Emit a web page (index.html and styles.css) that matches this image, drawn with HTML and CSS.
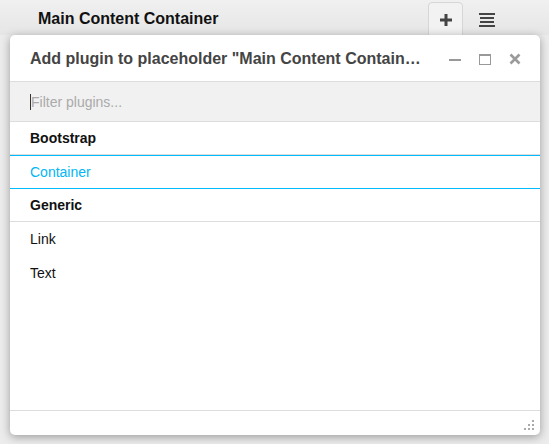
FILE: index.html
```html
<!DOCTYPE html>
<html>
<head>
<meta charset="utf-8">
<link rel="stylesheet" href="styles.css">
</head>
<body>
<div class="topbar">
  <div class="ph-title">Main Content Container</div>
  <div class="ph-actions">
    <div class="add-btn">
      <svg width="14" height="14" viewBox="0 0 14 14"><path d="M7 1v12M1 7h12" stroke="#444" stroke-width="3"/></svg>
    </div>
    <div class="menu-btn">
      <svg width="16" height="14" viewBox="0 0 16 14"><path d="M0 1h16M1 5h14M1 9h14M0 13h16" stroke="#444" stroke-width="2"/></svg>
    </div>
  </div>
</div>
<div class="dialog">
  <div class="dlg-head">
    <div class="dlg-title">Add plugin to placeholder "Main Content Container"</div>
    <div class="dlg-ctrls">
      <svg class="ctl" width="14" height="14" viewBox="0 0 14 14"><path d="M1 8h12" stroke="#999" stroke-width="2"/></svg>
      <svg class="ctl" width="14" height="14" viewBox="0 0 14 14"><rect x="1.5" y="2.5" width="11" height="10" fill="none" stroke="#999" stroke-width="1"/><path d="M1 3h12" stroke="#999" stroke-width="2"/></svg>
      <svg class="ctl" width="14" height="14" viewBox="0 0 14 14"><path d="M2.5 2.5l9 9M11.5 2.5l-9 9" stroke="#9a9a9a" stroke-width="2.6"/></svg>
    </div>
  </div>
  <div class="filter"><span class="caret"></span><span class="placeholder">Filter plugins...</span></div>
  <div class="list">
    <div class="row group">Bootstrap</div>
    <div class="row active">Container</div>
    <div class="row group">Generic</div>
    <div class="row item">Link</div>
    <div class="row item">Text</div>
  </div>
  <div class="dlg-foot">
    <svg class="grip" width="12" height="12" viewBox="0 0 12 12" fill="#aaa"><rect x="9" y="1" width="2" height="2"/><rect x="5" y="5" width="2" height="2"/><rect x="9" y="5" width="2" height="2"/><rect x="1" y="9" width="2" height="2"/><rect x="5" y="9" width="2" height="2"/><rect x="9" y="9" width="2" height="2"/></svg>
  </div>
</div>
</body>
</html>
```
FILE: styles.css
```css
html, body {
  margin: 0;
  padding: 0;
  background: #ececec;
  font-family: "Liberation Sans", Arial, sans-serif;
  width: 549px;
  height: 444px;
  overflow: hidden;
}
.topbar {
  height: 35px;
  display: flex;
  align-items: flex-start;
  justify-content: space-between;
  background: linear-gradient(#f0f0f0, #e6e6e6);
}
.ph-title {
  margin: 10px 0 0 38px;
  font-size: 16px;
  font-weight: bold;
  color: #111;
}
.ph-actions {
  display: flex;
  align-items: flex-start;
  margin: 2px 54px 0 0;
}
.add-btn {
  width: 35px;
  height: 40px;
  border: 1px solid #d6d6d6;
  border-radius: 4px;
  box-sizing: border-box;
  display: flex;
  justify-content: center;
  padding-top: 10px;
  background: #f2f2f2;
}
.add-btn svg { display: block; }
.menu-btn {
  margin-left: 16px;
  padding-top: 11px;
}
.menu-btn svg { display: block; }
.dialog {
  position: relative;
  margin-left: 10px;
  width: 530px;
  height: 400px;
  background: #fff;
  border-radius: 5px;
  box-shadow: 0 2px 10px rgba(0,0,0,0.35);
  display: flex;
  flex-direction: column;
  overflow: hidden;
}
.dlg-head {
  height: 46px;
  border-bottom: 1px solid #ddd;
  display: flex;
  align-items: center;
  padding: 0 18px 0 20px;
  flex-shrink: 0;
}
.dlg-title {
  font-size: 16px;
  font-weight: bold;
  color: #444;
  white-space: nowrap;
  overflow: hidden;
  text-overflow: ellipsis;
  width: 392px;
  margin-top: 1px;
}
.dlg-ctrls {
  margin-left: auto;
  display: flex;
  gap: 16px;
  padding-top: 1px;
}
.ctl { display: block; }
.filter {
  height: 39px;
  background: #f1f1f1;
  border-bottom: 1px solid #ddd;
  display: flex;
  align-items: center;
  padding-left: 20px;
  flex-shrink: 0;
  font-size: 14px;
}
.caret {
  width: 1px;
  height: 16px;
  background: #333;
}
.placeholder { color: #aaa; }
.list { flex-shrink: 0; }
.row {
  height: 34px;
  box-sizing: border-box;
  display: flex;
  align-items: center;
  padding-left: 20px;
  font-size: 14px;
  color: #111;
}
.row.group {
  font-weight: bold;
  border-bottom: 1px solid #ddd;
  height: 33px;
}
.row.active {
  color: #00b6f5;
  border-top: 1px solid #00bcff;
  border-bottom: 1px solid #00bcff;
}
.dlg-foot {
  margin-top: auto;
  height: 25px;
  box-sizing: border-box;
  border-top: 1px solid #ddd;
  display: flex;
  justify-content: flex-end;
  align-items: flex-end;
  padding: 0 5px 4px 0;
  flex-shrink: 0;
}
.grip { display: block; }
```
